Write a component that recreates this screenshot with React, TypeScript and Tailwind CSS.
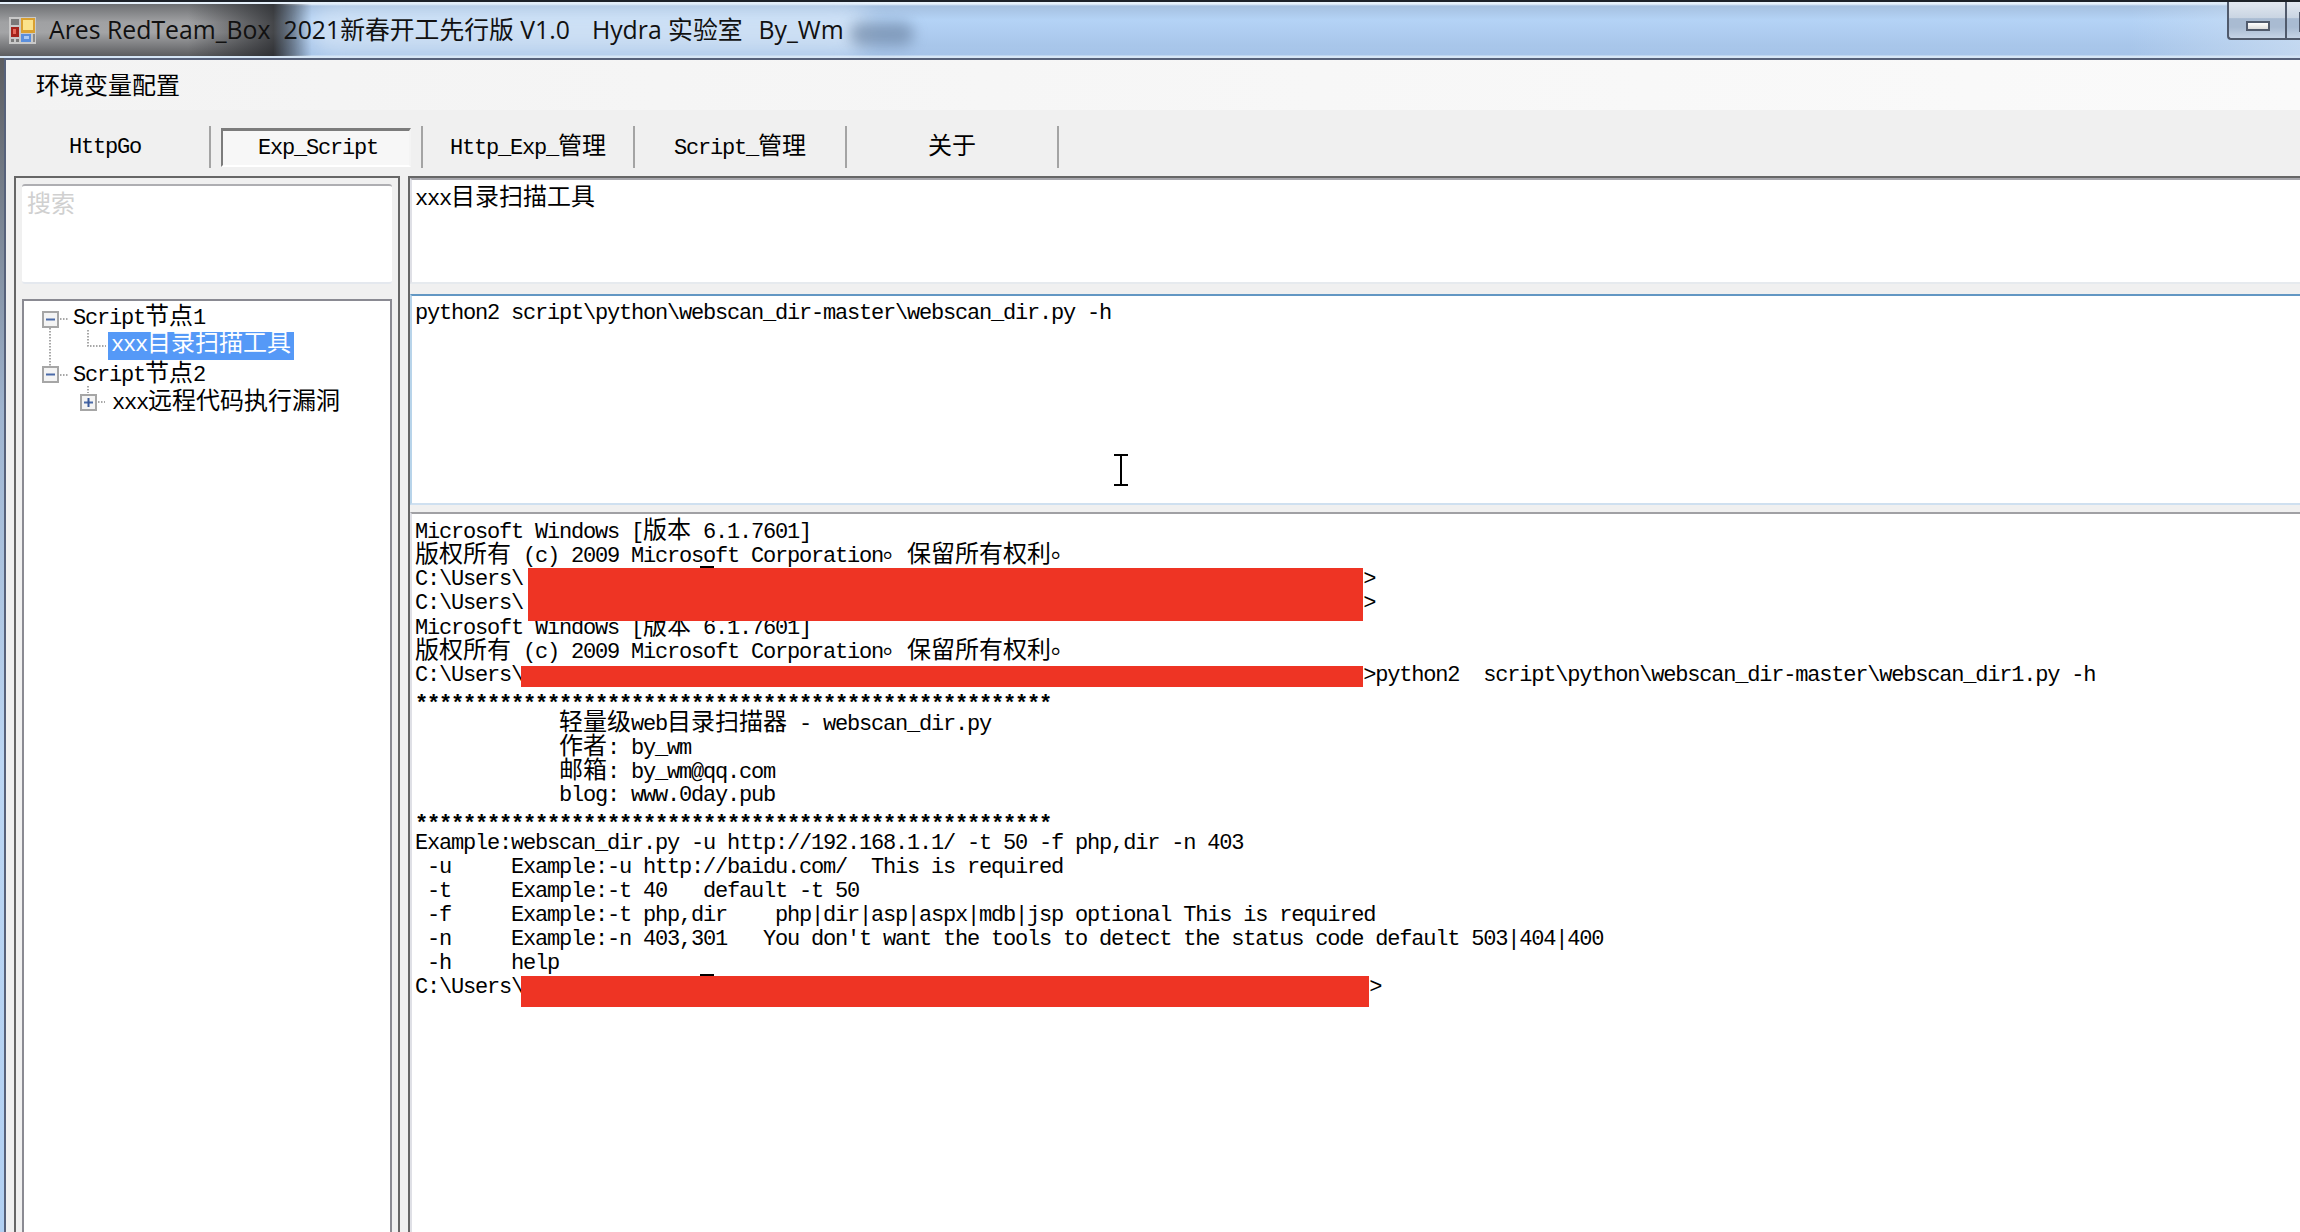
import React from "react";

const CJK = /([\u3000-\u303f\u4e00-\u9fff]+)/;
const DOT = /(。)/;

function Cjk({ s }: { s: string }) {
  return (
    <span className="text-[24px] tracking-normal">
      {s.split(DOT).map((p, i) =>
        p === "。" ? (
          <span key={i} className="inline-block w-[12px] -translate-y-[5px]">
            {p}
          </span>
        ) : (
          <span key={i}>{p}</span>
        ),
      )}
    </span>
  );
}

function T({ s }: { s: string }) {
  return (
    <>
      {s.split(CJK).map((p, i) => (CJK.test(p) ? <Cjk key={i} s={p} /> : <span key={i}>{p}</span>))}
    </>
  );
}

const mono =
  "font-['Liberation_Mono','Noto_Sans_CJK_SC',monospace] text-[22px] tracking-[-1.2px] leading-[24px] text-black whitespace-pre";

const pad = (n: number) => " ".repeat(n);
const stars = "*".repeat(53);

const lines: string[] = [
  "Microsoft Windows [版本 6.1.7601]",
  "版权所有 (c) 2009 Microsoft Corporation。 保留所有权利。",
  "C:\\Users\\" + pad(70) + ">",
  "C:\\Users\\" + pad(70) + ">",
  "Microsoft Windows [版本 6.1.7601]",
  "版权所有 (c) 2009 Microsoft Corporation。 保留所有权利。",
  "C:\\Users\\" + pad(70) + ">python2  script\\python\\webscan_dir-master\\webscan_dir1.py -h",
  stars,
  pad(12) + "轻量级web目录扫描器 - webscan_dir.py",
  pad(12) + "作者: by_wm",
  pad(12) + "邮箱: by_wm@qq.com",
  pad(12) + "blog: www.0day.pub",
  stars,
  "Example:webscan_dir.py -u http://192.168.1.1/ -t 50 -f php,dir -n 403",
  " -u     Example:-u http://baidu.com/  This is required",
  " -t     Example:-t 40   default -t 50",
  " -f     Example:-t php,dir    php|dir|asp|aspx|mdb|jsp optional This is required",
  " -n     Example:-n 403,301   You don't want the tools to detect the status code default 503|404|400",
  " -h     help",
];

function Redact({ className }: { className: string }) {
  return <div className={"absolute bg-[#ee3424] " + className} />;
}

function TreeLines() {
  const box = (x: number, y: number, plus: boolean) => (
    <g>
      <rect x={x + 1} y={y + 1} width={15} height={15} fill="#f4f4f4" stroke="#a6a6a6" strokeWidth={2} />
      <rect x={x + 4} y={y + 7.5} width={9} height={2} fill="#4a6aa8" />
      {plus && <rect x={x + 7.5} y={y + 4} width={2} height={9} fill="#3a5a9c" />}
    </g>
  );
  return (
    <svg className="absolute left-0 top-0" width={90} height={120} viewBox="0 0 90 120">
      <g stroke="#8a8a8a" strokeWidth={1.5} strokeDasharray="1.5 1.5" fill="none">
        <path d="M26 27V65" />
        <path d="M64 29V45H82" />
        <path d="M36 18H44" />
        <path d="M36 74H44" />
        <path d="M64 85V92" />
        <path d="M74 101H81" />
      </g>
      {box(18, 10, false)}
      {box(18, 65, false)}
      {box(56, 93, true)}
    </svg>
  );
}

function Tab({ label, active, w, extra }: { label: string; active?: boolean; w: string; extra?: string }) {
  return (
    <div className={"flex h-[42px] items-center justify-center border-r-2 border-[#a4a4a4] " + w + " " + mono + " " + (extra ?? "")}>
      {active ? (
        <div className="mr-[10px] ml-[10px] flex h-[39px] w-full items-center justify-center border-t-[3px] border-r-2 border-b-[2px] border-l-[2px] border-t-[#7c7c7c] border-r-[#f4f4f4] border-b-white border-l-[#7c7c7c] bg-[#f7f7f7] pt-[2px] pl-1">
          <T s={label} />
        </div>
      ) : (
        <span className="translate-y-[1px]">
          <T s={label} />
        </span>
      )}
    </div>
  );
}

export default function App() {
  return (
    <div className="flex h-[1232px] w-[2300px] flex-col overflow-hidden bg-white">
      {/* title bar */}
      <div className="relative flex h-[58px] shrink-0 items-start justify-between overflow-hidden border-t-2 border-[#1c2128] bg-[linear-gradient(to_bottom,#e6f1fb_0px,#e6f1fb_2px,#a5c0e0_4px,#b4d3f6_18px,#a8c6ea_44px,#a6c4e9_53px,#d6e6f6_54px)]">
        <div className="absolute left-0 top-[2px] h-[52px] w-[318px] bg-[linear-gradient(to_bottom,#6d6f72_0%,#a0a1a3_35%,#a3a4a6_55%,#5c5d60_100%)] [mask-image:linear-gradient(to_right,black_86%,transparent_98%)]">
          <div className="absolute right-0 top-0 h-full w-[130px] bg-[linear-gradient(to_right,transparent,#1c1e22_85%)] opacity-90" />
        </div>
        <div className="absolute left-[310px] top-[4px] h-[48px] w-[560px] rounded-full bg-[#d9e7f6] opacity-70 blur-[10px]" />
        <div className="absolute left-[850px] top-[20px] h-[24px] w-[64px] rounded-full bg-[#6b83a2] opacity-65 blur-[7px]" />
        <div className="absolute right-0 top-0 h-full w-[170px] bg-[linear-gradient(to_right,transparent,#cfe0f3)] opacity-70" />

        <div className="relative flex items-center pl-[9px] pt-[15px]">
          <svg width={27} height={27} viewBox="0 0 27 27" className="shrink-0">
            <rect x="0" y="0" width="27" height="27" fill="#c9c9c9" />
            <rect x="2" y="2" width="8" height="6" fill="#7a7a7a" />
            <rect x="2" y="10" width="8" height="10" fill="#a5241c" />
            <rect x="4" y="12" width="3" height="5" fill="#e8685a" />
            <rect x="2" y="22" width="3" height="3" fill="#7a7a7a" />
            <rect x="7" y="22" width="3" height="3" fill="#7a7a7a" />
            <rect x="12" y="1" width="14" height="15" fill="#d9a030" />
            <rect x="14" y="3" width="10" height="10" fill="#fbe28a" />
            <rect x="12" y="17" width="10" height="8" fill="#5b8fdc" />
            <rect x="15" y="19" width="5" height="3" fill="#a9c8f2" />
            <rect x="24" y="17" width="2" height="8" fill="#8a8a8a" />
          </svg>
          <div className="ml-[13px] flex h-[27px] -translate-y-[1px] items-center whitespace-pre font-['Open_Sans','Noto_Sans_CJK_SC',sans-serif] text-[24.8px] leading-[27px] text-[#111]">
            <span>Ares RedTeam_Box</span>
            <span className="ml-[13px]">2021新春开工先行版 V1.0</span>
            <span className="ml-[22px]">Hydra 实验室</span>
            <span className="ml-[16px]">By_Wm</span>
          </div>
        </div>

        <div className="relative flex h-[38px] items-start">
          <div className="flex h-[38px] w-[58px] items-center justify-center rounded-bl-[4px] border-b-2 border-l-2 border-[#505a6c] bg-[linear-gradient(to_bottom,#e2e8f0_0%,#c9d4e2_45%,#a9bbd2_46%,#a9bbd2_70%,#c6d4e6_100%)] pt-[12px] pl-[2px]">
            <div className="h-[10px] w-[24px] border-2 border-[#505a6c] bg-[linear-gradient(to_bottom,#ffffff,#dcdcdc)]" />
          </div>
          <div className="flex h-[38px] w-[15px] border-b-2 border-l-2 border-[#505a6c] bg-[linear-gradient(to_bottom,#e2e8f0_0%,#c9d4e2_45%,#a9bbd2_46%,#a9bbd2_70%,#c6d4e6_100%)]">
            <div className="mt-[10px] ml-[12px] h-[20px] w-[3px] bg-[#505a6c]" />
          </div>
        </div>
      </div>

      {/* window body */}
      <div className="flex min-h-0 flex-1">
        <div className="w-[4px] shrink-0 bg-[linear-gradient(to_bottom,#5c5d60,#9fb4cf_30%,#bcd6f3_60%,#b2d0f2)]" />
        <div className="flex min-w-0 flex-1 flex-col border-t-2 border-l-2 border-[#56617a]">
          {/* menu */}
          <div className="flex h-[50px] shrink-0 items-center bg-[linear-gradient(to_right,#f3f3f3,#fafafa)] pb-[2px] pl-[30px] font-['Noto_Sans_CJK_SC',sans-serif] text-[24px] text-black">
            环境变量配置
          </div>

          {/* tabs */}
          <div className="flex h-[66px] shrink-0 items-start bg-[#f0f0f0] pt-[16px]">
            <Tab label="HttpGo" w="w-[205px]" extra="pr-[5px]" />
            <Tab label="Exp_Script" active w="w-[212px]" />
            <Tab label="Http_Exp_管理" w="w-[212px]" />
            <Tab label="Script_管理" w="w-[212px]" />
            <Tab label="关于" w="w-[212px]" />
          </div>

          {/* panels */}
          <div className="flex min-h-0 flex-1 bg-[#f0f0f0]">
            {/* left */}
            <div className="ml-[8px] flex w-[386px] shrink-0 flex-col border-x-2 border-t-2 border-x-[#666666] border-t-[#666666] px-[6px] pt-[6px]">
              <div className="h-[100px] shrink-0 rounded-[3px] border-t-2 border-b-2 border-t-[#aeaeb2] border-b-[#e4e8ee] bg-white pt-[2px] pl-[5px] font-['Noto_Sans_CJK_SC',sans-serif] text-[24px] leading-[28px] text-[#d0d0d0]">
                搜索
              </div>
              <div className="relative mt-[15px] flex-1 border-x-2 border-t-2 border-[#8a8a92] bg-white pt-[5px]">
                <TreeLines />
                <div className={"h-[28px] pl-[49px] " + mono}>
                  <T s="Script节点1" />
                </div>
                <div className={"h-[28px] pl-[84px] " + mono}>
                  <span className="-mt-[2px] inline-block h-[28px] bg-[#5599f7] px-[3px] align-top leading-[26px] text-white">
                    <T s="xxx目录扫描工具" />
                  </span>
                </div>
                <div className={"mt-[1px] h-[28px] pl-[49px] " + mono}>
                  <T s="Script节点2" />
                </div>
                <div className={"h-[28px] pl-[88px] " + mono}>
                  <T s="xxx远程代码执行漏洞" />
                </div>
              </div>
            </div>

            {/* right */}
            <div className="ml-[8px] flex min-w-0 flex-1 flex-col border-t-2 border-l-2 border-[#666666]">
              <div className={"h-[106px] shrink-0 border-t-2 border-b-2 border-l-2 border-t-[#a6a6ac] border-b-[#e6eaee] border-l-[#dfe0e6] bg-white pt-[7px] pl-[3px] " + mono}>
                <T s="xxx目录扫描工具" />
              </div>
              <div className={"mt-[10px] h-[211px] shrink-0 border-t-2 border-b-2 border-l-2 border-t-[#6297c3] border-b-[#cfe0f0] border-l-[#b8d4ea] bg-white pt-[6px] pl-[3px] " + mono}>
                <div className="relative h-full">
                  <T s={"python2 script\\python\\webscan_dir-master\\webscan_dir.py -h"} />
                  <svg className="absolute top-[151px] left-[698px]" width={16} height={34} viewBox="0 0 16 34">
                    <path d="M1 2H15M1 32H15M8 2V32" stroke="#000" strokeWidth={2} fill="none" />
                  </svg>
                </div>
              </div>
              <div className="relative mt-[7px] flex-1 border-t-2 border-l-2 border-t-[#a0a0a4] border-l-[#dfe0e6] bg-white pt-[6px] pl-[3px]">
                {lines.map((l, i) => (
                  <div key={i} className={"h-[24px] " + mono + (l === stars ? " translate-y-[5px] font-bold" : "")}>
                    <T s={l} />
                  </div>
                ))}
                <div className={"h-[24px] " + mono}>
                  {"C:\\Users\\" + pad(70)}
                  <span className="ml-[6px]">{">"}</span>
                </div>
                <Redact className="top-[54px] left-[116px] h-[53px] w-[835px]" />
                <Redact className="top-[152px] left-[109px] h-[21px] w-[842px]" />
                <Redact className="top-[462px] left-[109px] h-[31px] w-[848px]" />
                <div className="absolute top-[52px] left-[288px] h-[2px] w-[14px] bg-black" />
                <div className="absolute top-[460px] left-[288px] h-[2px] w-[14px] bg-black" />
              </div>
            </div>
          </div>
        </div>
      </div>
    </div>
  );
}
